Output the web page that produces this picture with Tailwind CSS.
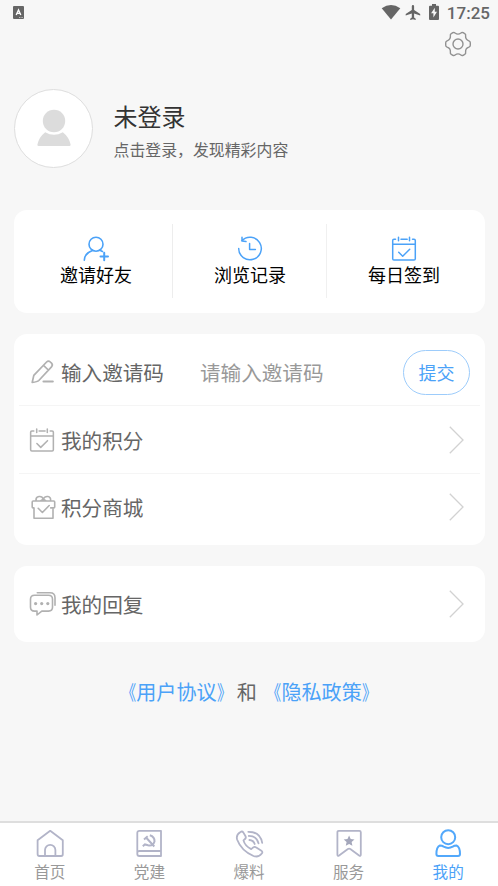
<!DOCTYPE html>
<html lang="zh-CN">
<head>
<meta charset="utf-8">
<title>我的</title>
<script src="https://cdn.jsdelivr.net/npm/@tailwindcss/browser@4"></script>
</head>
<body class="bg-[#f7f7f7]">
<div class="w-[498px] h-[886px] overflow-hidden flex flex-col bg-[#f7f7f7] font-['Noto_Sans_CJK_SC',sans-serif] text-[#666]">
  <header class="h-[26px] shrink-0 flex items-center justify-between pl-[13px] pr-[8px] text-[#666]">
    <svg class="w-[11px] h-[13px] -mt-[1px]" viewBox="0 0 11 13"><rect width="11" height="13" rx="1" fill="#666"/><path d="M3.2 9 5.5 4 7.8 9M4 7.4h3" fill="none" stroke="#fff" stroke-width="1.4"/><path d="M6 11.5h4" stroke="#bbb" stroke-dasharray="1 .6"/></svg>
    <div class="flex items-center">
      <svg class="w-[20px] h-[16px] -mt-[2px]" viewBox="0 0 20 16" fill="currentColor"><path d="M.7 4.3Q10-2.2 19.3 4.3L10 15.5Z"/></svg>
      <svg class="w-[16px] h-[17px] ml-[4px] -mt-[1px]" viewBox="0 0 16 17" fill="currentColor"><path d="M15.2 11.4V9.9L9.1 6V2.2a1.15 1.15 0 0 0-2.3 0V6L.7 9.9v1.5l6.1-1.9v4.1l-1.6 1.2V16l2.75-.8 2.75.8v-1.2l-1.6-1.2V9.5Z"/></svg>
      <svg class="w-[10px] h-[16px] ml-[8px] -mt-[2px]" viewBox="0 0 10 16"><path d="M3 0h4v1.7h2q1 0 1 1V15q0 1-1 1H1q-1 0-1-1V2.7q0-1 1-1h2Z" fill="#666"/><path d="M5.8 3.8 2.1 9.2h2.3v4.2l3.6-5.6H5.8Z" fill="#f7f7f7"/></svg>
      <span class="ml-[8px] font-['Roboto',sans-serif] font-medium text-[17px] leading-[20px]">17:25</span>
    </div>
  </header>

  <div class="h-[36px] shrink-0 flex items-center justify-end pr-[26px]">
    <svg class="w-[28px] h-[28px]" viewBox="-14 -14 28 28" fill="none" stroke="#919191" stroke-width="1.4" stroke-linejoin="round"><circle r="5"/><path d="M-5.2-11.3Q-3.9-11.9-2.9-11Q0-8.8 2.9-11Q3.9-11.9 5.2-11.3L7-10.2Q8-9.5 7.6-8.2Q7.3-4.4 10.9-3.2Q12.3-2.6 12.3-1.3V1.3Q12.3 2.6 10.9 3.2Q7.3 4.4 7.6 8.2Q8 9.5 7 10.2L5.2 11.3Q3.9 11.9 2.9 11Q0 8.8-2.9 11Q-3.9 11.9-5.2 11.3L-7 10.2Q-8 9.5-7.6 8.2Q-7.3 4.4-10.9 3.2Q-12.3 2.6-12.3 1.3V-1.3Q-12.3-2.6-10.9-3.2Q-7.3-4.4-7.6-8.2Q-8-9.5-7-10.2Z"/></svg>
  </div>

  <section class="mt-[27px] h-[79px] shrink-0 flex items-center px-[14px]">
    <div class="w-[79px] h-[79px] rounded-full bg-white border border-[#dedede] flex items-center justify-center">
      <svg class="w-[34px] h-[38px] -mt-[2px]" viewBox="0 0 34 38" fill="#dcdcdc"><circle cx="17" cy="12" r="11.2"/><path d="M8.2 23.2Q17 28.5 25.8 23.2Q32 28 33.6 35.5Q33.7 37 32.4 37H1.6Q.3 37 .4 35.5Q2 28 8.2 23.2Z"/></svg>
    </div>
    <div class="ml-[20.5px] pt-[3px] flex flex-col">
      <h1 class="text-[24px] leading-[36px] text-[#333]">未登录</h1>
      <p class="mt-[3px] text-[15.9px] leading-[26px]">点击登录，发现精彩内容</p>
    </div>
  </section>

  <section class="mt-[42px] mx-[14px] w-[471px] h-[103px] shrink-0 rounded-[13px] bg-white flex items-start pt-[14px] px-[5px] text-black text-[18px] leading-[26px]">
    <div class="w-[154px] h-[74px] border-r border-[#ededed] flex flex-col items-center pt-[11px]">
      <svg class="w-[26px] h-[27px]" viewBox="0 0 26 27" fill="none" stroke="#4ba2f8" stroke-width="1.6" stroke-linecap="round"><circle cx="13" cy="9.2" r="7"/><path d="M9.5 15.4Q1.5 18.2 1.3 25.3M16.8 15.3l2.7 1.2"/><path d="M17.5 21.5h7.5M21.2 17.8v7.5" stroke-width="2"/></svg>
      <span class="-mt-[1px] pl-[1px]">邀请好友</span>
    </div>
    <div class="w-[154px] h-[74px] border-r border-[#f0f0f0] flex flex-col items-center pt-[11px]">
      <svg class="w-[26px] h-[27px]" viewBox="0 0 26 27" fill="none" stroke="#4ba2f8" stroke-width="1.5" stroke-linecap="round" stroke-linejoin="round"><path d="M4.7 5.8A11.3 11.3 0 1 1 1.7 13.6M5 2.3v3.8l4 .5"/><path d="M12.6 8.6v5.9h5.8"/></svg>
      <span class="-mt-[1px] pl-[1px]">浏览记录</span>
    </div>
    <div class="w-[153px] h-[74px] flex flex-col items-center pt-[11px]">
      <svg class="w-[26px] h-[27px]" viewBox="0 0 26 27" fill="none" stroke="#4ba2f8" stroke-width="1.5" stroke-linecap="round" stroke-linejoin="round"><path d="M4.5 4.2H3q-1.3 0-1.3 1.3v18.2Q1.7 25 3 25h20q1.3 0 1.3-1.3V5.5q0-1.3-1.3-1.3h-1.5M10 4.2h6.2M1.7 9.3h22.6M7.5 2.2v3.6M18.5 2.2v3.6"/><path d="m7.7 17.2 4 4 7-7"/></svg>
      <span class="-mt-[1px] pl-[1px]">每日签到</span>
    </div>
  </section>

  <section class="mt-[21px] mx-[14px] w-[471px] h-[211px] shrink-0 rounded-[13px] bg-white px-[5px] pt-[4px] text-[20.6px] leading-[30px]">
    <div class="h-[68px] pt-[1px] border-b border-[#f5f5f5] flex items-center pl-[11px] pr-[10px]">
      <svg class="w-[26px] h-[26px]" viewBox="0 0 26 26" fill="none" stroke="#b1b1b1" stroke-width="1.7" stroke-linecap="round" stroke-linejoin="round"><path d="M2.2 23.5 3.8 16.4 16.6 3Q18.4 1.2 20.3 3L21.5 4.2Q23.2 6 21.5 7.8L8.8 21.5Q7.5 22.8 2.2 23.5ZM13.5 6.3l4.8 4.7"/><path d="M13.5 22.5h9.3" stroke-width="2.1"/></svg>
      <span class="ml-[5px]">输入邀请码</span>
      <span class="ml-[36px] text-[#999]">请输入邀请码</span>
      <button class="ml-auto w-[67px] h-[45px] rounded-full border-[1.5px] border-[#9dccfb] text-[#4ba2f8] text-[18px] leading-[26px]">提交</button>
    </div>
    <div class="h-[68px] border-b border-[#f5f5f5] flex items-center pl-[10px] pr-[16px]">
      <svg class="w-[26px] h-[26px]" viewBox="0 0 26 27" fill="none" stroke="#b1b1b1" stroke-width="1.6" stroke-linecap="round" stroke-linejoin="round"><path d="M4.5 4.2H2.5q-1.3 0-1.3 1.3v18.2Q1.2 25 2.5 25h21q1.3 0 1.3-1.3V5.5q0-1.3-1.3-1.3h-2M10 4.2h6.2M1.2 9.3h23.6M7.5 2.2v3.6M18.5 2.2v3.6"/><path d="m7.7 17.2 4 4 7-7"/></svg>
      <span class="ml-[6px]">我的积分</span>
      <svg class="ml-auto w-[15px] h-[28px]" viewBox="0 0 15 28" fill="none" stroke="#d2d2d2" stroke-width="1.3"><path d="m.8.8 13.2 13.2L.8 27.2"/></svg>
    </div>
    <div class="h-[65px] flex items-center pl-[11px] pr-[16px]">
      <svg class="w-[26px] h-[26px]" viewBox="0 0 26 26" fill="none" stroke="#b1b1b1" stroke-width="1.6" stroke-linecap="round" stroke-linejoin="round"><path d="M3.9 13.9H3q-.8 0-.8-.8V8q0-1 1-1h20.5q1 0 1 1v5q0 .9-1 .9h-3M4 14v10.3h19v-9M6 6.8C5.5 1.5 12 1.3 13.3 5.2C15 1.3 21.5 1.5 20.5 6.8M10.8 6.6l2.5-1.4 2.5 1.4"/><path d="m8.2 14.3 4.2 4.2 6.8-7"/></svg>
      <span class="ml-[5px]">积分商城</span>
      <svg class="ml-auto w-[15px] h-[28px]" viewBox="0 0 15 28" fill="none" stroke="#d2d2d2" stroke-width="1.3"><path d="m.8.8 13.2 13.2L.8 27.2"/></svg>
    </div>
  </section>

  <section class="mt-[21px] mx-[14px] w-[471px] h-[76px] shrink-0 rounded-[13px] bg-white flex items-center pl-[15px] pr-[21px] text-[20.6px] leading-[30px]">
    <svg class="w-[28px] h-[26px]" viewBox="0 0 28 26" fill="none" stroke="#b1b1b1" stroke-width="1.6" stroke-linecap="round" stroke-linejoin="round"><path d="M5.5 4.3h14q4 0 4 4v8q0 3.8-4 3.8h-6.7L8 24v-3.9H5.5q-4 0-4-3.8v-8q0-4 4-4ZM8.3 1.8H21q5 0 5 5v7.5"/><g fill="#b1b1b1" stroke="none"><circle cx="6.6" cy="12.6" r="1.6"/><circle cx="12.7" cy="12.6" r="1.6"/><circle cx="18.8" cy="12.6" r="1.6"/></g></svg>
    <span class="ml-[4px]">我的回复</span>
    <svg class="ml-auto w-[15px] h-[28px]" viewBox="0 0 15 28" fill="none" stroke="#d2d2d2" stroke-width="1.3"><path d="m.8.8 13.2 13.2L.8 27.2"/></svg>
  </section>

  <p class="mt-[35px] text-center text-[20.1px] leading-[30px] whitespace-nowrap"><a class="text-[#4ba2f8]"><span class="inline-block origin-right scale-x-[.74]">《</span>用户协议<span class="inline-block origin-left scale-x-[.74]">》</span></a>和 <a class="text-[#4ba2f8]"><span class="inline-block origin-right scale-x-[.74]">《</span>隐私政策<span class="inline-block origin-left scale-x-[.74]">》</span></a></p>

  <nav class="mt-auto h-[65px] shrink-0 border-t-2 border-[#dedede] bg-white grid grid-cols-5 text-[15.6px] leading-[22px] text-[#999]">
    <div class="flex flex-col items-center pt-[5px]">
      <svg class="w-[30px] h-[32px]" viewBox="0 0 30 32" fill="none" stroke="#b2b4c8" stroke-width="1.8" stroke-linejoin="round"><path d="M2.6 12.2 15.2 2.8 27.8 12.2V26.3q0 1.7-1.7 1.7H4.3q-1.7 0-1.7-1.7ZM10 28v-6a5.2 5.2 0 0 1 10.4 0v6"/></svg>
      <span>首页</span>
    </div>
    <div class="flex flex-col items-center pt-[5px]">
      <svg class="w-[30px] h-[32px]" viewBox="0 0 30 32" fill="none" stroke="#b2b4c8" stroke-width="1.8" stroke-linejoin="round"><path d="M5.4 2.8H27V28H5.4Q3.3 28 3.3 26V4.8q0-2 2.1-2ZM3.3 24.3q.5-1.3 2.1-1.3H27"/><path d="M15.8 7.3Q20.8 8.8 20.5 13.5Q19 18.3 14 17.3L10.5 16.2M8.8 18.3l2.5-2.2M10 11.5l3.7-3.2M12.5 10l7.8 8.5" stroke-width="2"/></svg>
      <span>党建</span>
    </div>
    <div class="flex flex-col items-center pt-[5px]">
      <svg class="w-[30px] h-[32px]" viewBox="0 0 30 32" fill="none" stroke="#b2b4c8" stroke-width="1.8" stroke-linecap="round" stroke-linejoin="round"><path d="M6.5 4Q8.2 2.9 9.4 4.6L11.4 8Q12.4 9.8 11 11L9.5 12.4Q10.8 17.8 17.2 21.1L19.2 19.4Q20.7 18.4 22.3 19.5L27.4 22.8Q29.1 24 27.8 25.5Q24.5 29.7 19.5 28Q7.2 22.5 3.2 11.7Q1.6 7 6.5 4Z"/><path d="M14.3 3.8Q26 3.6 28.2 14.8M14.8 7.9Q22.7 8 24.5 15.3M15.4 12Q19.5 12.2 20.7 16"/></svg>
      <span>爆料</span>
    </div>
    <div class="flex flex-col items-center pt-[5px]">
      <svg class="w-[30px] h-[32px]" viewBox="0 0 30 32" fill="none" stroke="#b2b4c8" stroke-width="1.8" stroke-linejoin="round"><path d="M4.8 2.8h20.6q1.4 0 1.4 1.4V26.5q0 2.1-1.7 1L16.3 21Q15.1 20.2 13.9 21L5.1 27.5Q3.4 28.6 3.4 26.5V4.2q0-1.4 1.4-1.4Z"/><path d="m15.1 7.5 1.6 3.5 3.8.4-2.9 2.6.8 3.8-3.3-1.9-3.3 1.9.8-3.8-2.9-2.6 3.8-.4Z" fill="#a4a7bb" stroke="none"/></svg>
      <span>服务</span>
    </div>
    <div class="flex flex-col items-center pt-[5px] text-[#4ba2f8]">
      <svg class="w-[30px] h-[32px]" viewBox="0 0 30 32" fill="none" stroke="#52a8fb" stroke-width="2" stroke-linejoin="round"><circle cx="15.2" cy="9.2" r="7"/><path d="M7 17.4Q9 17.4 10.7 18.6Q15.2 21.2 19.7 18.6Q21.4 17.4 23.4 17.4Q27 19 27 26Q27 28 25 28H5.4Q3.4 28 3.4 26Q3.4 19 7 17.4Z"/></svg>
      <span>我的</span>
    </div>
  </nav>
</div>
</body>
</html>
